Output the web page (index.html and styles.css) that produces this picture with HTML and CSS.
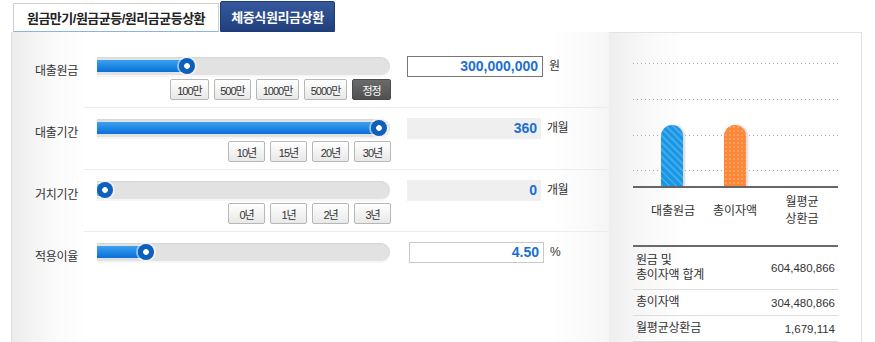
FILE: index.html
```html
<!DOCTYPE html>
<html lang="ko">
<head>
  <meta charset="UTF-8">
  <title>대출계산기</title>
  <link rel="stylesheet" href="styles.css">
</head>
<body>
<div class="tabs">
  <a href="#" class="tab">원금만기/원금균등/원리금균등상환</a>
  <a href="#" class="tab on">체증식원리금상환</a>
</div>
<div class="calc">
  <!--입력-->
  <div class="form">
    <div class="row">
      <div class="label">대출원금</div>
      <div class="field">
        <div class="ctrl">
          <div class="track"><div class="fill" style="width:90px"><span class="knob"></span></div></div>
          <div class="btns">
            <span class="btn m">100만</span>
            <span class="btn">500만</span>
            <span class="btn w">1000만</span>
            <span class="btn w">5000만</span>
            <span class="btn m dark">정정</span>
          </div>
        </div>
        <div class="value">
          <span class="num focus">300,000,000</span>
          <span class="unit">원</span>
        </div>
      </div>
    </div>
    <div class="row">
      <div class="label">대출기간</div>
      <div class="field">
        <div class="ctrl">
          <div class="track"><div class="fill" style="width:282px"><span class="knob"></span></div></div>
          <div class="btns">
            <span class="btn">10년</span>
            <span class="btn">15년</span>
            <span class="btn">20년</span>
            <span class="btn">30년</span>
          </div>
        </div>
        <div class="value">
          <span class="num ro">360</span>
          <span class="unit">개월</span>
        </div>
      </div>
    </div>
    <div class="row">
      <div class="label">거치기간</div>
      <div class="field">
        <div class="ctrl">
          <div class="track"><div class="fill" style="width:8px"><span class="knob"></span></div></div>
          <div class="btns">
            <span class="btn">0년</span>
            <span class="btn">1년</span>
            <span class="btn">2년</span>
            <span class="btn">3년</span>
          </div>
        </div>
        <div class="value">
          <span class="num ro">0</span>
          <span class="unit">개월</span>
        </div>
      </div>
    </div>
    <div class="row">
      <div class="label">적용이율</div>
      <div class="field last">
        <div class="ctrl">
          <div class="track"><div class="fill" style="width:49px"><span class="knob"></span></div></div>
        </div>
        <div class="value">
          <span class="num rate">4.50</span>
          <span class="unit">%</span>
        </div>
      </div>
    </div>
  </div>
  <!--결과-->
  <div class="chart">
    <div class="plot">
      <span class="bar blue" style="height:61px"></span>
      <span class="bar orange" style="height:61px"></span>
    </div>
    <div class="legend">
      <span>대출원금</span>
      <span>총이자액</span>
      <span>월평균<br>상환금</span>
    </div>
    <div class="result">
      <div class="res-row tall"><span class="res-name">원금 및<br>총이자액 합계</span><span class="res-val">604,480,866</span></div>
      <div class="res-row"><span class="res-name">총이자액</span><span class="res-val">304,480,866</span></div>
      <div class="res-row"><span class="res-name">월평균상환금</span><span class="res-val">1,679,114</span></div>
    </div>
  </div>
</div>
</body>
</html>
```

FILE: styles.css
```css
* {
  margin: 0;
  padding: 0;
  box-sizing: border-box;
}

body {
  font-family: "Liberation Sans", "Noto Sans CJK KR", sans-serif;
  color: #333;
  background: #fff;
}

a {
  text-decoration: none;
}

/* 탭 */
.tabs {
  display: flex;
  align-items: flex-end;
  height: 32px;
  margin-left: 13px;
}

.tab {
  display: flex;
  align-items: center;
  justify-content: center;
  width: 206px;
  height: 29px;
  border: 1px solid #cfcfcf;
  border-bottom: 1px solid #86b6e4;
  background: #fff;
  color: #222;
  font-size: 13px;
  font-weight: bold;
  letter-spacing: -0.5px;
}

.tab.on {
  width: 115px;
  height: 31px;
  margin-left: 1px;
  border: 1px solid #1d3b78;
  border-radius: 2px 2px 0 0;
  background: linear-gradient(#36599c, #213f7d);
  color: #fff;
  letter-spacing: -0.4px;
}

.calc {
  display: flex;
  margin-left: 11px;
}

/* 입력 영역 */
.form {
  width: 598px;
  height: 320px;
  padding-top: 14px;
  border-left: 1px solid #dcdcdc;
  background: linear-gradient(to right, #ececec 0, #fafafa 40px, #fff 75px, #fff 540px, #f6f6f6 596px, #eee 598px);
}

.row {
  display: flex;
}

.label {
  width: 72px;
  padding: 18px 0 0 23px;
  font-size: 12px;
  line-height: 14px;
  letter-spacing: -0.3px;
}

.field {
  display: flex;
  flex: 1;
  height: 62px;
  padding-left: 13px;
  border-bottom: 1px solid #ececec;
}

.field.last {
  border-bottom: 0;
}

.ctrl {
  width: 294px;
  padding-top: 11px;
}

.track {
  width: 293px;
  height: 18px;
  padding: 3px 0;
  border-radius: 0 9px 9px 0;
  background: #e2e2e2;
  box-shadow: inset 0 1px 2px rgba(0, 0, 0, .06), 0 2px 0 #f6f6f6;
}

.fill {
  position: relative;
  height: 12px;
  background: linear-gradient(#3aa1f0, #0a6fd8);
}

.knob {
  position: absolute;
  right: -8px;
  top: -2px;
  width: 16px;
  height: 16px;
  border-radius: 50%;
  background: radial-gradient(circle, #fff 0 2.5px, #0f5fbd 3.2px);
  box-shadow: 0 0 0 2px rgba(255, 255, 255, .5);
}

.btns {
  display: flex;
  justify-content: flex-end;
  gap: 5px;
  margin-top: 4px;
}

.btn {
  display: flex;
  align-items: center;
  justify-content: center;
  width: 37px;
  height: 21px;
  border: 1px solid #b7b7b7;
  border-radius: 2px;
  background: linear-gradient(#fff, #e8e8e8);
  color: #333;
  font-size: 11px;
  letter-spacing: -1px;
}

.btn.m {
  width: 39px;
}

.btn.w {
  width: 43px;
}

.btn.dark {
  border-color: #4a4a4a;
  background: linear-gradient(#6b6b6b, #505050);
  color: #fff;
}

.value {
  display: flex;
  align-items: flex-start;
  margin-left: 16px;
  padding-top: 10px;
}

.num {
  width: 136px;
  height: 21px;
  padding-right: 4px;
  color: #1b6fd3;
  font-size: 14px;
  font-weight: bold;
  line-height: 21px;
  text-align: right;
}

.num.focus {
  border: 1px solid #777;
  line-height: 19px;
}

.num.ro {
  width: 134px;
  background: #efefef;
  line-height: 21px;
}

.num.rate {
  width: 135px;
  margin-left: 2px;
  border: 1px solid #c9c9c9;
  line-height: 19px;
}

.unit {
  margin-left: 6px;
  font-size: 12px;
  line-height: 21px;
  letter-spacing: -0.5px;
}

/* 차트 영역 */
.chart {
  width: 253px;
  height: 320px;
  padding: 30px 0 0 24px;
  border-top: 1px solid #e2e2e2;
  border-right: 1px solid #e2e2e2;
  background: linear-gradient(to right, #eee 0, #f8f8f8 35px, #fff 76px);
}

.plot {
  display: flex;
  align-items: flex-end;
  gap: 41px;
  width: 205px;
  height: 125px;
  padding-left: 28px;
  border-bottom: 2px solid #666;
  background-image:
    repeating-linear-gradient(90deg, #aaa 0 1px, transparent 1px 4px),
    repeating-linear-gradient(90deg, #aaa 0 1px, transparent 1px 4px),
    repeating-linear-gradient(90deg, #aaa 0 1px, transparent 1px 4px),
    repeating-linear-gradient(90deg, #aaa 0 1px, transparent 1px 4px);
  background-size: 100% 1px;
  background-repeat: no-repeat;
  background-position: 0 0, 0 36px, 0 72px, 0 107px;
}

.bar {
  width: 22px;
  border-radius: 11px 11px 0 0;
  box-shadow: 2px 0 2px rgba(0, 0, 0, .15);
}

.bar.blue {
  background-color: #1797e6;
  background-image: repeating-linear-gradient(45deg, rgba(255, 255, 255, .18) 0 2px, transparent 2px 5px);
}

.bar.orange {
  background-color: #fd8736;
  background-image: radial-gradient(rgba(255, 255, 255, .22) 1px, transparent 1.5px);
  background-size: 4px 4px;
}

.legend {
  display: grid;
  grid-template-columns: 62px 62px 72px;
  align-items: center;
  height: 34px;
  margin-top: 6px;
  padding-left: 9px;
  font-size: 12px;
  line-height: 17px;
  text-align: center;
}

.result {
  width: 205px;
  margin-top: 17px;
  border-top: 2px solid #6a6a6a;
}

.res-row {
  display: flex;
  justify-content: space-between;
  align-items: center;
  height: 26px;
  padding: 0 3px;
  border-bottom: 1px solid #ddd;
  font-size: 12px;
}

.res-row.tall {
  height: 43px;
}

.res-name {
  line-height: 15px;
  letter-spacing: -0.2px;
}

.res-val {
  font-size: 11.5px;
}
```
